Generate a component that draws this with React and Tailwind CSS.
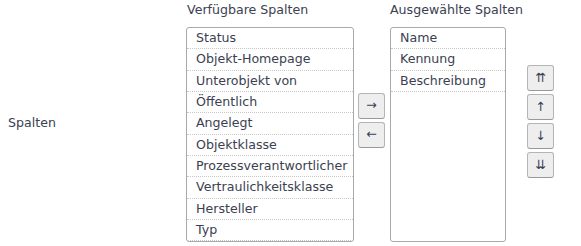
import React from 'react'

const available = ["Status","Objekt-Homepage","Unterobjekt von","Öffentlich","Angelegt","Objektklasse","Prozessverantwortlicher","Vertraulichkeitsklasse","Hersteller","Typ"]
const selected = ["Name","Kennung","Beschreibung"]

const Btn = ({children}) => (
  <button className="w-[27px] h-[26px] flex items-center justify-center rounded-[3px] border border-[#b5b5b5] border-b-[#999] bg-[#eeeeee] text-[12.6px] leading-none text-[#3b4151]">
    {children}
  </button>
)

function ListBox({items}) {
  return (
    <div className="w-full h-[215px] border border-[#aaaaaa] rounded-[3px] bg-white overflow-hidden">
      {items.map((it,i)=>(
        <div key={i} className="h-[21.33px] leading-[20.33px] pl-[9px] border-b border-dotted border-[#c8c8c8] text-[12.6px] text-[#3b4151] whitespace-nowrap">{it}</div>
      ))}
    </div>
  )
}

export default function App() {
  return (
    <div className="w-[581px] h-[242px] bg-white flex items-center text-[12.6px] text-[#3b4151]" style={{fontFamily:'"DejaVu Sans", sans-serif'}}>
      <div className="w-[186px] shrink-0 pl-[8px] pt-[4px]">Spalten</div>
      <div className="w-[168px] shrink-0 flex flex-col">
        <div className="h-[27px] pl-[1px] leading-[20px] whitespace-nowrap">Verfügbare Spalten</div>
        <ListBox items={available} />
      </div>
      <div className="flex flex-col gap-[3px] ml-[4px] -mt-[2px]">
        <Btn>→</Btn>
        <Btn>←</Btn>
      </div>
      <div className="w-[116px] shrink-0 flex flex-col ml-[5px]">
        <div className="h-[27px] leading-[20px] whitespace-nowrap">Ausgewählte Spalten</div>
        <ListBox items={selected} />
      </div>
      <div className="flex flex-col gap-[3px] ml-[21px] pt-[1px]">
        <Btn>⇈</Btn>
        <Btn>↑</Btn>
        <Btn>↓</Btn>
        <Btn>⇊</Btn>
      </div>
    </div>
  )
}
